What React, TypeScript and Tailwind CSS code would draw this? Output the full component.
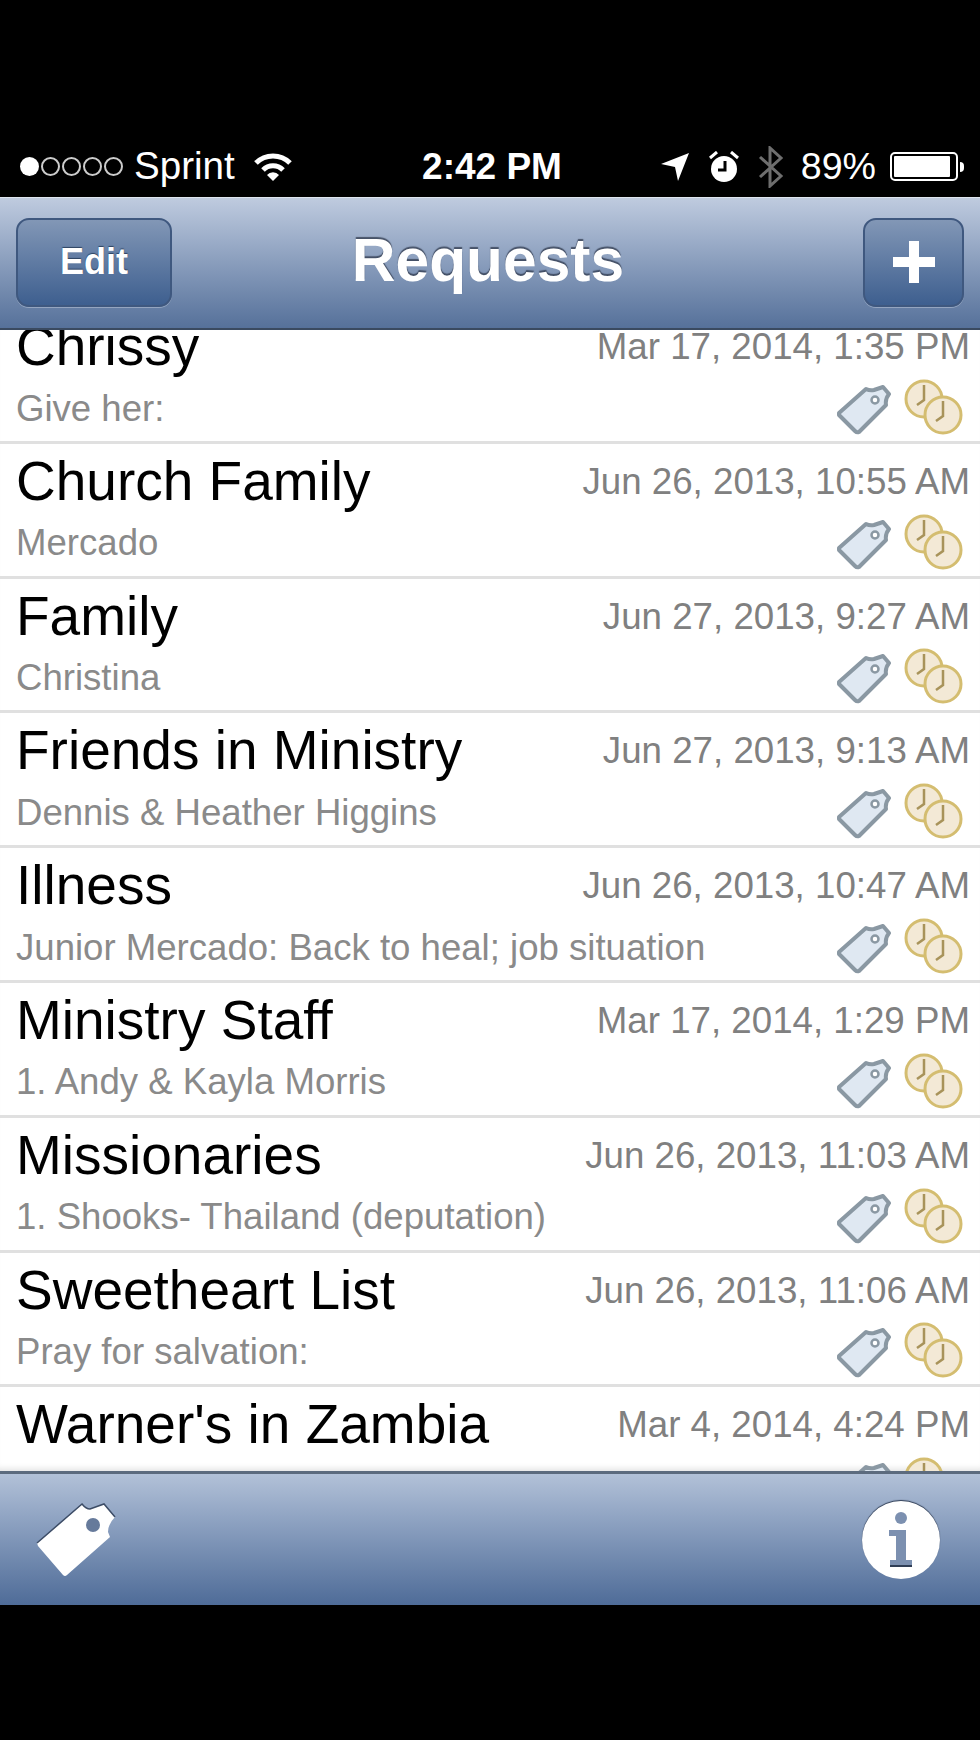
const rows = [
  { title: "Chrissy", date: "Mar 17, 2014, 1:35 PM", note: "Give her:" },
  { title: "Church Family", date: "Jun 26, 2013, 10:55 AM", note: "Mercado" },
  { title: "Family", date: "Jun 27, 2013, 9:27 AM", note: "Christina" },
  { title: "Friends in Ministry", date: "Jun 27, 2013, 9:13 AM", note: "Dennis & Heather Higgins" },
  { title: "Illness", date: "Jun 26, 2013, 10:47 AM", note: "Junior Mercado: Back to heal; job situation" },
  { title: "Ministry Staff", date: "Mar 17, 2014, 1:29 PM", note: "1. Andy & Kayla Morris" },
  { title: "Missionaries", date: "Jun 26, 2013, 11:03 AM", note: "1. Shooks- Thailand (deputation)" },
  { title: "Sweetheart List", date: "Jun 26, 2013, 11:06 AM", note: "Pray for salvation:" },
  { title: "Warner's in Zambia", date: "Mar 4, 2014, 4:24 PM", note: "" },
];

const TagIcon = () => (
  <svg width="56" height="56" viewBox="0 0 56 56" className="shrink-0">
    <path
      d="M3 34 L30 10 Q34 12 38 11 L47 8 L53 15 Q49 20 50 26 L23 53 Q21 54 19 52 L3 36 Z"
      fill="#dfe8f2"
      stroke="#8a98a3"
      strokeWidth="4"
      strokeLinejoin="round"
    />
    <circle cx="39" cy="21" r="3.5" fill="#fff" stroke="#8a98a3" strokeWidth="2.5" />
  </svg>
);

const ClockFace = ({ cx, cy }: { cx: number; cy: number }) => (
  <g>
    <circle cx={cx} cy={cy} r="18" fill="#f3e9d6" stroke="#d4bd70" strokeWidth="3" />
    <path
      d={`M${cx} ${cy - 14} V${cy + 1} L${cx - 7} ${cy + 6}`}
      fill="none"
      stroke="#a8935a"
      strokeWidth="2.5"
    />
  </g>
);

const ClocksIcon = () => (
  <svg width="60" height="56" viewBox="0 0 60 56" className="shrink-0">
    <ClockFace cx={20} cy={20} />
    <ClockFace cx={39} cy={36} />
  </svg>
);

const BigTag = () => (
  <svg width="82" height="76" viewBox="0 0 82 76">
    <path
      d="M2 41 L47 2 Q51 7 55 7 L69 2 L80 15 Q73 22 73 30 L75 35 L32 73 Q30 75 28 73 L3 44 Z"
      fill="#fff"
    />
    <path d="M2 41 L47 2 Q51 7 55 7 L69 2 L80 15" fill="none" stroke="#3c4c66" strokeWidth="1.5" />
    <circle cx="58" cy="23" r="7" fill="#667a9b" />
  </svg>
);

const BarButton = ({ children, className }: { children: React.ReactNode; className: string }) => (
  <div
    className={`mb-[2px] flex h-[89px] items-center justify-center rounded-[13px] border-2 border-[#3f587f] bg-gradient-to-b from-[#8297b6] to-[#3e5f8f] text-white shadow-[0_1px_0_rgba(255,255,255,0.3)] ${className}`}
  >
    {children}
  </div>
);

export default function App() {
  return (
    <div className="flex h-[1740px] w-[980px] flex-col overflow-hidden bg-black font-['Liberation_Sans',Arial,sans-serif]">
      {/* status bar */}
      <div className="mt-[136px] flex h-[61px] items-center justify-between pr-[16px] pl-[20px] text-white">
        <div className="flex w-[340px] items-center">
          <span className="h-[19px] w-[19px] rounded-full bg-white" />
          {[0, 1, 2, 3].map((i) => (
            <span key={i} className="ml-[2px] h-[19px] w-[19px] rounded-full border-2 border-white/80" />
          ))}
          <span className="ml-[11px] text-[38.6px] leading-none">Sprint</span>
          <svg width="40" height="29" viewBox="0 0 40 29" className="ml-[18px]">
            <path d="M3 11 A24 24 0 0 1 37 11" fill="none" stroke="#fff" strokeWidth="5" />
            <path d="M10 18 A14 14 0 0 1 30 18" fill="none" stroke="#fff" strokeWidth="5" />
            <path d="M20 29 L14 23 A8 8 0 0 1 26 23 Z" fill="#fff" />
          </svg>
        </div>
        <span className="text-[37px] leading-none font-bold">2:42 PM</span>
        <div className="flex w-[340px] items-center justify-end">
          <svg width="30" height="30" viewBox="0 0 30 30">
            <path d="M1 12 L29 1 L18 29 L15 15 Z" fill="#fff" />
          </svg>
          <svg width="32" height="32" viewBox="0 0 32 32" className="ml-[18px]">
            <path d="M2 7 L9 1 M30 7 L23 1" stroke="#fff" strokeWidth="3" />
            <circle cx="16" cy="18" r="13" fill="#fff" />
            <path d="M17 10 V19 H10" fill="none" stroke="#000" strokeWidth="3" />
          </svg>
          <svg width="26" height="42" viewBox="0 0 26 42" className="ml-[18px]">
            <path d="M2 11 L23 30 L12 40 V2 L23 12 L2 31" fill="none" stroke="#6e6e6e" strokeWidth="3" />
          </svg>
          <span className="ml-[17px] text-[37.6px] leading-none">89%</span>
          <div className="ml-[14px] flex h-[29px] w-[68px] items-center rounded-[5px] border-2 border-white p-[2px]">
            <div className="h-full w-[56px] rounded-[1px] bg-white" />
          </div>
          <div className="ml-[2px] h-[10px] w-[4px] rounded-r-full bg-white" />
        </div>
      </div>

      {/* nav bar */}
      <div className="flex h-[133px] shrink-0 items-center justify-between border-t border-b-2 border-t-[#dfe5ee] border-b-[#3a4a60] bg-gradient-to-b from-[#bfcbdf] to-[#56719a] px-[16px]">
        <div className="flex w-[160px]">
          <BarButton className="w-[156px] text-[36px] font-bold [text-shadow:0_-1px_1px_rgba(30,50,80,0.8)]">Edit</BarButton>
        </div>
        <span className="mb-[6px] pr-[4px] text-[60.5px] leading-none font-bold text-white [text-shadow:0_-2px_1px_rgba(50,60,80,0.8)]">
          Requests
        </span>
        <div className="flex w-[160px] justify-end">
          <BarButton className="w-[101px]">
            <svg width="42" height="42" viewBox="0 0 42 42">
              <path d="M16 0 H26 V16 H42 V26 H26 V42 H16 V26 H0 V16 H16 Z" fill="#fff" />
            </svg>
          </BarButton>
        </div>
      </div>

      {/* list */}
      <div className="h-[1141px] shrink-0 overflow-hidden bg-white shadow-[inset_0_-7px_6px_-5px_rgba(0,0,0,0.12)]">
        <div className="-mt-[21px]">
          {rows.map((row) => (
            <div
              key={row.title}
              className="flex h-[134.8px] flex-col justify-between border-b-[3px] border-[#e0e0e0] pt-[7px] pr-[10px] pb-[6px] pl-[16px]"
            >
              <div className="flex h-[60px] items-center justify-between">
                <span className="text-[55px] leading-[60px] text-black">{row.title}</span>
                <span className="mt-[2px] text-[36.7px] leading-[40px] text-[#808080]">{row.date}</span>
              </div>
              <div className="flex items-center justify-between">
                <span className="mt-[4px] text-[36.6px] leading-none text-[#8a8a8a]">{row.note}</span>
                <div className="mr-[6px] flex items-center gap-[12px]">
                  <TagIcon />
                  <ClocksIcon />
                </div>
              </div>
            </div>
          ))}
        </div>
      </div>

      {/* toolbar */}
      <div className="flex h-[134px] shrink-0 items-center justify-between border-t-[3px] border-t-[#5c6b7e] bg-gradient-to-b from-[#b2c1d8] to-[#4f6c98] pr-[40px] pl-[35px]">
        <BigTag />
        <div className="relative flex h-[78px] w-[78px] items-center justify-center rounded-full bg-white shadow-[0_-1px_1px_#2f3d55]">
          <svg width="24" height="56" viewBox="0 0 24 56">
            <circle cx="12" cy="6" r="6" fill="#7c90b0" />
            <path d="M0 18 H17 V48 H23 V54 H1 V48 H7 V24 H0 Z" fill="#7c90b0" />
            <path d="M1 54 H23" stroke="#2f3d55" strokeWidth="2" />
          </svg>
        </div>
      </div>
    </div>
  );
}
